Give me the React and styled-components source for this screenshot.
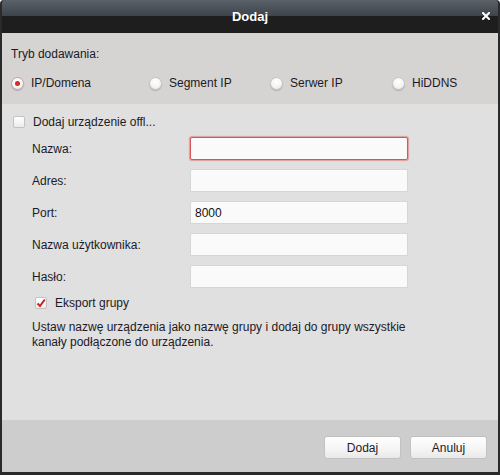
import React, { useState } from 'react';
import styled, { createGlobalStyle } from 'styled-components';

const Global = createGlobalStyle`
	html, body {
		margin: 0;
		padding: 0;
		background: #ffffff;
	}
	* {
		box-sizing: border-box;
	}
`;

const Window = styled.div`
	width: 500px;
	height: 475px;
	display: flex;
	flex-direction: column;
	background: #2a2a2a;
	border: 2px solid #2a2a2a;
	border-top: none;
	border-bottom-width: 3px;
	border-radius: 4px 4px 0 0;
	overflow: hidden;
	font-family: "Liberation Sans", Arial, sans-serif;
	font-size: 12px;
	color: #1c1a26;
`;

const TitleBar = styled.div`
	position: relative;
	height: 33px;
	margin: 0 -2px;
	display: flex;
	align-items: center;
	justify-content: center;
	background: linear-gradient(to bottom, #5b6169 0%, #3d444c 48%, #1e1e1e 50%, #1e1e1e 100%);
	color: #ffffff;
	font-weight: bold;
	font-size: 13px;
`;

const Close = styled.span`
	position: absolute;
	right: 10px;
	top: 12px;
	width: 8px;
	height: 8px;
	display: flex;
	svg {
		display: block;
	}
`;

const ModeSection = styled.div`
	background: #d6d4d2;
	padding: 14px 9px 0 9px;
	height: 71px;
`;

const SectionTitle = styled.div`
	line-height: 15px;
`;

const RadioRow = styled.div`
	display: grid;
	grid-template-columns: 138px 121px 122px 1fr;
	margin-top: 13px;
	padding-left: 0;
`;

const RadioItem = styled.label`
	display: flex;
	align-items: center;
	gap: 7px;
	height: 16px;
	cursor: pointer;
`;

const RadioDot = styled.span`
	width: 13px;
	height: 13px;
	border-radius: 50%;
	border: 1px solid ${p => (p.$on ? '#c8a0a0' : '#c4c4c4')};
	background: radial-gradient(circle at 50% 35%, #ffffff 0%, #f3f3f3 60%, #dcdcdc 100%);
	box-shadow: 0 1px 1px rgba(0, 0, 0, 0.18);
	display: flex;
	align-items: center;
	justify-content: center;
	&::after {
		content: '';
		width: 5px;
		height: 5px;
		border-radius: 50%;
		background: #d42a2a;
		display: ${p => (p.$on ? 'block' : 'none')};
	}
`;

const FormSection = styled.div`
	flex: 1;
	background: #e0e0e0;
	padding: 10px 9px 0 9px;
`;

const CheckRow = styled.label`
	display: flex;
	align-items: center;
	gap: 8px;
	height: 16px;
	margin-left: ${p => p.$indent || 0}px;
	margin-top: ${p => p.$top || 0}px;
`;

const CheckBox = styled.span`
	width: 12px;
	height: 12px;
	border: 1px solid #c2c2c2;
	background: linear-gradient(to bottom, #ffffff, #ececec);
	border-radius: 2px;
	display: flex;
	align-items: center;
	justify-content: center;
`;

const Fields = styled.div`
	display: flex;
	flex-direction: column;
	gap: 9px;
	margin-top: 7px;
	padding-left: 21px;
`;

const FieldRow = styled.div`
	display: grid;
	grid-template-columns: 158px 218px;
	align-items: center;
	height: 23px;
`;

const Input = styled.input`
	height: 23px;
	width: 218px;
	border: 1px solid ${p => (p.$error ? '#d85656' : '#d6d6d6')};
	box-shadow: ${p => (p.$error ? '0 0 1px 1px rgba(220, 90, 90, 0.5)' : 'none')};
	border-radius: ${p => (p.$error ? '2px' : '0')};
	background: #fafafa;
	font-family: "Liberation Sans", Arial, sans-serif;
	font-size: 12px;
	color: #111;
	padding: 0 4px;
	outline: none;
`;

const Description = styled.p`
	margin: 9px 0 0 21px;
	line-height: 15px;
	width: 390px;
`;

const Footer = styled.div`
	height: 52px;
	background: #cdcdcd;
	display: flex;
	justify-content: flex-end;
	align-items: flex-start;
	gap: 9px;
	padding: 16px 11px 0 0;
`;

const Button = styled.button`
	width: 77px;
	height: 23px;
	border: 1px solid #c2c2c2;
	border-radius: 3px;
	background: linear-gradient(to bottom, #ffffff 0%, #f4f4f4 60%, #e9e9e9 100%);
	font-family: "Liberation Sans", Arial, sans-serif;
	font-size: 12px;
	color: #1c1a26;
	padding: 0;
	cursor: pointer;
`;

const modes = ['IP/Domena', 'Segment IP', 'Serwer IP', 'HiDDNS'];

const fields = [
	{ label: 'Nazwa:', value: '', error: true },
	{ label: 'Adres:', value: '' },
	{ label: 'Port:', value: '8000' },
	{ label: 'Nazwa użytkownika:', value: '' },
	{ label: 'Hasło:', value: '', type: 'password' },
];

export default function App() {
	const [mode, setMode] = useState(0);

	return (
		<>
			<Global />
			<Window>
				<TitleBar>
					Dodaj
					<Close>
						<svg width="8" height="8" viewBox="0 0 8 8">
							<path d="M1 1 L7 7 M7 1 L1 7" stroke="#ffffff" strokeWidth="2" strokeLinecap="square" />
						</svg>
					</Close>
				</TitleBar>
				<ModeSection>
					<SectionTitle>Tryb dodawania:</SectionTitle>
					<RadioRow>
						{modes.map((m, i) => (
							<RadioItem key={m} onClick={() => setMode(i)}>
								<RadioDot $on={mode === i} />
								{m}
							</RadioItem>
						))}
					</RadioRow>
				</ModeSection>
				<FormSection>
					<CheckRow $indent={2}>
						<CheckBox />
						Dodaj urządzenie offl...
					</CheckRow>
					<Fields>
						{fields.map(f => (
							<FieldRow key={f.label}>
								<span>{f.label}</span>
								<Input $error={f.error} type={f.type || 'text'} defaultValue={f.value} />
							</FieldRow>
						))}
					</Fields>
					<CheckRow $indent={24} $top={7}>
						<CheckBox>
							<svg width="10" height="10" viewBox="0 0 10 10">
								<path d="M1.5 5.5 L4 8 L8.8 1.5" stroke="#cc1f1f" strokeWidth="2" fill="none" />
							</svg>
						</CheckBox>
						Eksport grupy
					</CheckRow>
					<Description>
						Ustaw nazwę urządzenia jako nazwę grupy i dodaj do grupy wszystkie kanały podłączone do urządzenia.
					</Description>
				</FormSection>
				<Footer>
					<Button>Dodaj</Button>
					<Button>Anuluj</Button>
				</Footer>
			</Window>
		</>
	);
}
